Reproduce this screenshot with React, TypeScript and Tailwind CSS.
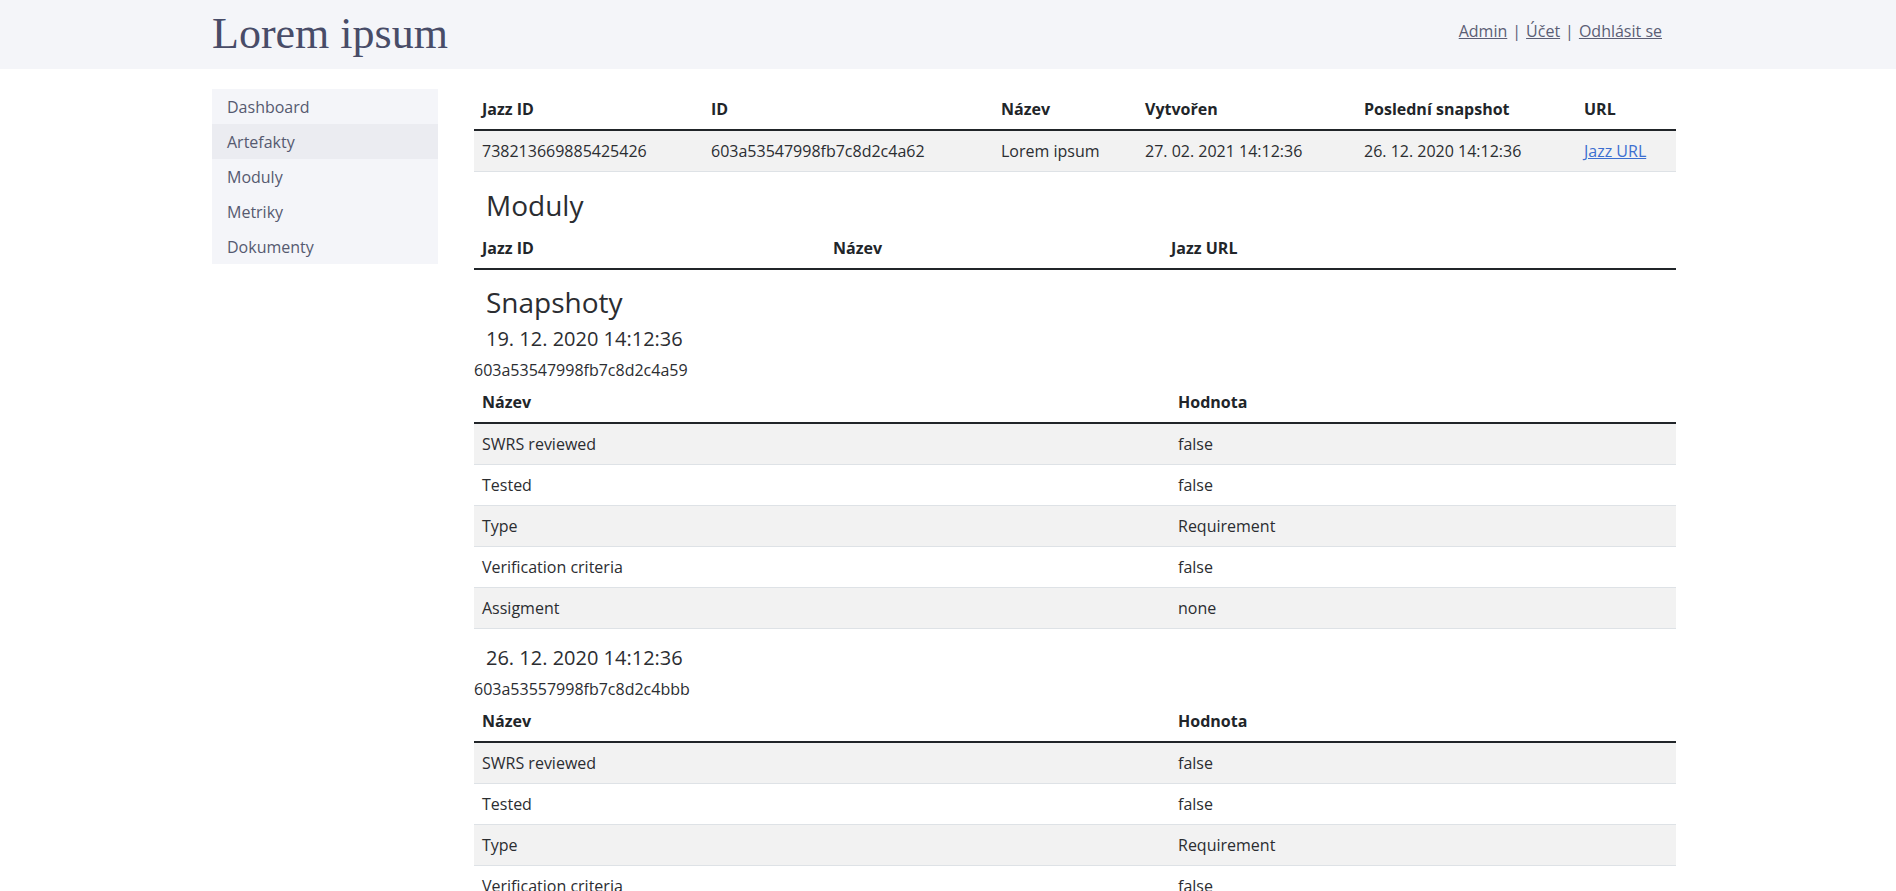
import React from "react";

const sideItems = ["Dashboard", "Artefakty", "Moduly", "Metriky", "Dokumenty"];

type Snapshot = {
  date: string;
  id: string;
  values: [string, string][];
};

const snapshots: Snapshot[] = [
  {
    date: "19. 12. 2020 14:12:36",
    id: "603a53547998fb7c8d2c4a59",
    values: [
      ["SWRS reviewed", "false"],
      ["Tested", "false"],
      ["Type", "Requirement"],
      ["Verification criteria", "false"],
      ["Assigment", "none"],
    ],
  },
  {
    date: "26. 12. 2020 14:12:36",
    id: "603a53557998fb7c8d2c4bbb",
    values: [
      ["SWRS reviewed", "false"],
      ["Tested", "false"],
      ["Type", "Requirement"],
      ["Verification criteria", "false"],
      ["Assigment", "none"],
    ],
  },
];

function Th({ children, w }: { children?: React.ReactNode; w?: string }) {
  return (
    <th className={`px-2 py-2 text-left font-bold leading-6 text-[#212529] ${w ?? ""}`}>
      {children}
    </th>
  );
}

function Td({ children }: { children?: React.ReactNode }) {
  return <td className="px-2 py-2 leading-6">{children}</td>;
}

export default function App() {
  return (
    <div className="min-h-screen bg-white font-['Open_Sans',sans-serif] text-[16px] text-[#2b2d31]">
      <header className="h-[69px] bg-[#f4f5f9]">
        <div className="mx-auto flex h-full w-[1472px] items-center justify-between pr-[22px]">
          <h1 className="pb-[2px] font-['Liberation_Serif',serif] text-[44px] leading-none text-[#484c68]">
            Lorem ipsum
          </h1>
          <nav className="pb-[7px] text-[16px] text-[#5b5e75]">
            <a href="#" className="underline">Admin</a>
            <span className="mx-[5px]">|</span>
            <a href="#" className="underline">Účet</a>
            <span className="mx-[5px]">|</span>
            <a href="#" className="underline">Odhlásit se</a>
          </nav>
        </div>
      </header>

      <div className="mx-auto mt-[20px] flex w-[1472px] items-start gap-[36px]">
        <aside className="w-[226px] shrink-0 bg-[#f4f5f9]">
          {sideItems.map((item) => (
            <div
              key={item}
              className={`h-[35px] px-[15px] pt-px leading-[35px] text-[#565a70] ${
                item === "Artefakty" ? "bg-[#ebecf1]" : ""
              }`}
            >
              {item}
            </div>
          ))}
        </aside>

        <main className="w-[1202px]">
          <table className="w-full table-fixed border-collapse">
            <thead>
              <tr className="border-b-2 border-[#212529]">
                <Th w="w-[229px]">Jazz ID</Th>
                <Th w="w-[290px]">ID</Th>
                <Th w="w-[144px]">Název</Th>
                <Th w="w-[219px]">Vytvořen</Th>
                <Th w="w-[220px]">Poslední snapshot</Th>
                <Th>URL</Th>
              </tr>
            </thead>
            <tbody>
              <tr className="border-b border-[#dee2e6] bg-[#f2f2f2]">
                <Td>738213669885425426</Td>
                <Td>603a53547998fb7c8d2c4a62</Td>
                <Td>Lorem ipsum</Td>
                <Td>27. 02. 2021 14:12:36</Td>
                <Td>26. 12. 2020 14:12:36</Td>
                <Td>
                  <a href="#" className="text-[#3d6fd0] underline">
                    Jazz URL
                  </a>
                </Td>
              </tr>
            </tbody>
          </table>

          <h2 className="mt-[16px] pl-[12px] text-[28px] leading-[34px]">Moduly</h2>
          <table className="mt-[6px] w-full table-fixed border-collapse">
            <thead>
              <tr className="border-b-2 border-[#212529]">
                <Th w="w-[351px]">Jazz ID</Th>
                <Th w="w-[338px]">Název</Th>
                <Th>Jazz URL</Th>
              </tr>
            </thead>
          </table>

          <h2 className="mt-[15px] pl-[12px] text-[28px] leading-[34px]">Snapshoty</h2>

          {snapshots.map((snap, i) => (
            <section key={snap.id} className={i === 0 ? "mt-[8px]" : "mt-[17px]"}>
              <h3 className="pl-[12px] text-[20px] leading-6">{snap.date}</h3>
              <div className="mt-[7px] leading-6">{snap.id}</div>
              <table className="w-full table-fixed border-collapse">
                <thead>
                  <tr className="border-b-2 border-[#212529]">
                    <Th w="w-[696px]">Název</Th>
                    <Th>Hodnota</Th>
                  </tr>
                </thead>
                <tbody>
                  {snap.values.map(([name, value], j) => (
                    <tr
                      key={name}
                      className={`border-b border-[#dee2e6] ${
                        j % 2 === 0 ? "bg-[#f2f2f2]" : ""
                      }`}
                    >
                      <Td>{name}</Td>
                      <Td>{value}</Td>
                    </tr>
                  ))}
                </tbody>
              </table>
            </section>
          ))}
        </main>
      </div>
    </div>
  );
}
